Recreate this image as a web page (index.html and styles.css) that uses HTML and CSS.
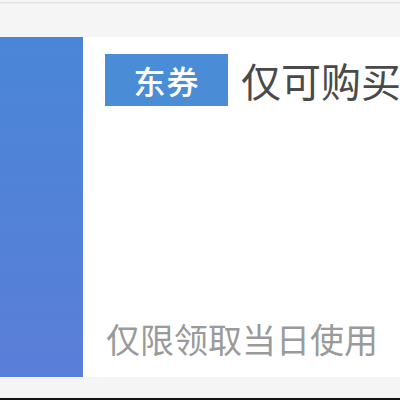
FILE: index.html
```html
<!DOCTYPE html>
<html lang="zh-CN">
<head>
    <meta charset="UTF-8">
    <title>东券</title>
    <link rel="stylesheet" href="styles.css">
</head>
<body>
    <div class="page">
        <div class="top-line"></div>

        <!-- Tarjeta del cupón -->
        <div class="coupon">
            <div class="coupon-side"></div>
            <div class="coupon-body">
                <div class="coupon-title">
                    <span class="badge">东券</span>
                    <span class="title-text">仅可购买自营商品</span>
                </div>
                <div class="coupon-note">仅限领取当日使用</div>
            </div>
        </div>

        <div class="bottom-line"></div>
    </div>
</body>
</html>
```

FILE: styles.css
```css
body {
    font-family: "Noto Sans CJK SC", "Noto Sans", sans-serif;
    background-color: #f5f5f5;
    margin: 0;
    padding: 0;
    overflow: hidden;
}

.page {
    width: 400px;
    height: 400px;
    display: flex;
    flex-direction: column;
}

.top-line {
    height: 1px;
    margin-top: 2px;
    background-color: #e2e2e2;
    box-shadow: 0 1px 1px rgba(0, 0, 0, 0.04);
}

/* Tarjeta */
.coupon {
    margin-top: 34px;
    height: 340px;
    display: flex;
    background-color: #ffffff;
}

.coupon-side {
    width: 83px;
    flex-shrink: 0;
    background: linear-gradient(180deg, #4a86d7 0%, #5a7ed9 100%);
}

.coupon-body {
    flex: 1;
    min-width: 0;
    display: flex;
    flex-direction: column;
    justify-content: space-between;
    padding: 17px 0 18px 22px;
}

.coupon-title {
    display: flex;
    align-items: center;
    white-space: nowrap;
    overflow: hidden;
}

.badge {
    flex-shrink: 0;
    width: 123px;
    height: 52px;
    line-height: 52px;
    background-color: #4a8dd6;
    color: #ffffff;
    font-size: 32px;
    font-weight: 500;
    text-align: center;
    letter-spacing: 1px;
}

.title-text {
    margin-left: 13px;
    font-size: 40px;
    line-height: 52px;
    color: #4a4a4a;
}

.coupon-note {
    padding-left: 1px;
    font-size: 34px;
    line-height: 40px;
    color: #9a9a9a;
}

.bottom-line {
    margin-top: auto;
    height: 2px;
    background-color: #111111;
}
```
